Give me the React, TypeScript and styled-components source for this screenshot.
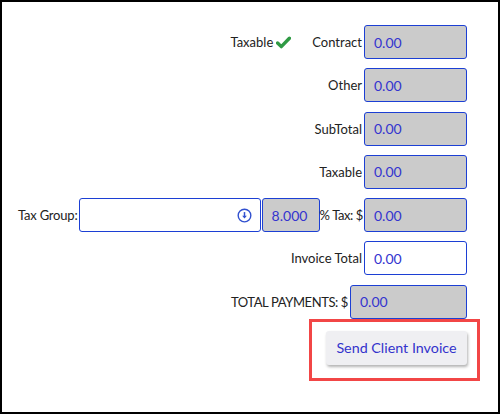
import React from 'react'
import styled, { createGlobalStyle } from 'styled-components'

const GlobalStyle = createGlobalStyle`
  html, body {
    margin: 0;
    padding: 0;
    background: #ffffff;
  }

  body {
    font-family: Lato, 'Open Sans', Arial, sans-serif;
  }
`

const Frame = styled.div`
  box-sizing: border-box;
  width: 500px;
  height: 414px;
  border: 2px solid #000000;
  background: #ffffff;
  padding: 23px 31px 0 16px;
  display: flex;
  flex-direction: column;
  align-items: flex-end;
`

const Totals = styled.div`
  display: flex;
  flex-direction: column;
  align-items: flex-end;
  gap: 9.3px;
  width: 100%;
`

const Row = styled.div<{ $full?: boolean }>`
  display: flex;
  align-items: center;
  justify-content: flex-end;
  width: ${p => (p.$full ? '100%' : 'auto')};
`

const Label = styled.span<{ $spacing?: number; $gap?: number }>`
  font-size: 13px;
  letter-spacing: ${p => p.$spacing ?? 0}px;
  color: #222222;
  margin-right: ${p => p.$gap ?? 2}px;
  white-space: nowrap;
`

const Flag = styled.span`
  display: inline-flex;
  align-items: center;
  gap: 3px;
  font-size: 13px;
  color: #222222;
  margin-right: 21px;
`

const Field = styled.input<{ $width?: number; $open?: boolean }>`
  box-sizing: border-box;
  flex: none;
  width: ${p => p.$width ?? 103}px;
  height: 34px;
  padding: 0 0 0 9px;
  border: 1px solid #1c3fd4;
  border-radius: 3px;
  background: ${p => (p.$open ? '#ffffff' : '#cbcbcb')};
  color: #3434cf;
  font-family: Lato, 'Open Sans', Arial, sans-serif;
  font-size: 14px;
  outline: none;
`

const Select = styled.div`
  box-sizing: border-box;
  flex: 1;
  height: 34px;
  border: 1px solid #1c3fd4;
  border-radius: 3px;
  background: #ffffff;
  display: flex;
  align-items: center;
  justify-content: flex-end;
  padding-right: 8px;
  margin-right: 1px;
`

const ActionBox = styled.div`
  margin-right: -13px;
  border: 3px solid #f24646;
  padding: 9px 10px 13px 14px;
`

const SendButton = styled.button`
  box-sizing: border-box;
  width: 141px;
  height: 34px;
  border: none;
  border-radius: 3px;
  background: #efeff2;
  box-shadow: 1px 2px 3px rgba(0, 0, 0, 0.3);
  color: #3333cc;
  font-family: Lato, 'Open Sans', Arial, sans-serif;
  font-size: 14.3px;
  padding: 0;
  cursor: pointer;
`

const CheckMark = () => (
  <svg width="15" height="13" viewBox="0 0 15 13">
    <path d="M1.6 7 L5.3 10.6 L13.4 2.2" fill="none" stroke="#2f9a44" strokeWidth="3.4" strokeLinecap="round" strokeLinejoin="round" />
  </svg>
)

const DropdownIcon = () => (
  <svg width="15" height="15" viewBox="0 0 14 14">
    <circle cx="7" cy="7" r="5.9" fill="none" stroke="#3150cf" strokeWidth="1.3" />
    <path d="M7 3.8 V8" stroke="#3150cf" strokeWidth="1.4" />
    <path d="M4.8 7.2 L7 9.8 L9.2 7.2 Z" fill="#3150cf" />
  </svg>
)

export default function App() {
  return (
    <>
      <GlobalStyle />
      <Frame>
        <Totals>
          <Row>
            <Flag>
              Taxable
              <CheckMark />
            </Flag>
            <Label>Contract</Label>
            <Field readOnly value="0.00" />
          </Row>
          <Row>
            <Label>Other</Label>
            <Field readOnly value="0.00" />
          </Row>
          <Row>
            <Label>SubTotal</Label>
            <Field readOnly value="0.00" />
          </Row>
          <Row>
            <Label>Taxable</Label>
            <Field readOnly value="0.00" />
          </Row>
          <Row $full>
            <Label $spacing={-0.2}>Tax Group:</Label>
            <Select>
              <DropdownIcon />
            </Select>
            <Field readOnly value="8.000" $width={58} />
            <Label $spacing={-0.4} $gap={1}>% Tax: $</Label>
            <Field readOnly value="0.00" />
          </Row>
          <Row>
            <Label>Invoice Total</Label>
            <Field readOnly value="0.00" $open />
          </Row>
          <Row>
            <Label $spacing={-0.4}>TOTAL PAYMENTS: $</Label>
            <Field readOnly value="0.00" $width={117} />
          </Row>
        </Totals>
        <ActionBox>
          <SendButton>Send Client Invoice</SendButton>
        </ActionBox>
      </Frame>
    </>
  )
}
